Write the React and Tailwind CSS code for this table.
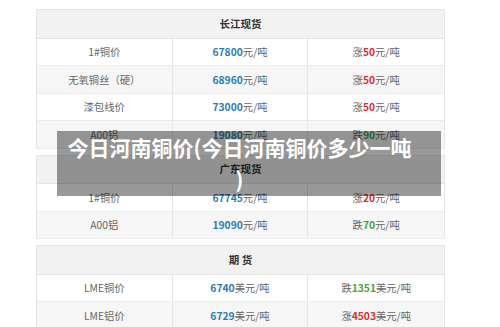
import React from 'react';

const tables = [
  {
    title: '长江现货',
    rows: [
      { name: '1#铜价', price: '67800', unit: '元/吨', dir: '涨', diff: '50', diffUnit: '元/吨' },
      { name: '无氧铜丝（硬）', price: '68960', unit: '元/吨', dir: '涨', diff: '50', diffUnit: '元/吨' },
      { name: '漆包线价', price: '73000', unit: '元/吨', dir: '涨', diff: '50', diffUnit: '元/吨' },
      { name: 'A00铝', price: '19080', unit: '元/吨', dir: '跌', diff: '90', diffUnit: '元/吨' },
    ],
  },
  {
    title: '广东现货',
    rows: [
      { name: '1#铜价', price: '67745', unit: '元/吨', dir: '涨', diff: '20', diffUnit: '元/吨' },
      { name: 'A00铝', price: '19090', unit: '元/吨', dir: '跌', diff: '70', diffUnit: '元/吨' },
    ],
  },
  {
    title: '期 货',
    rows: [
      { name: 'LME铜价', price: '6740', unit: '美元/吨', dir: '跌', diff: '1351', diffUnit: '美元/吨' },
      { name: 'LME铝价', price: '6729', unit: '美元/吨', dir: '涨', diff: '4503', diffUnit: '美元/吨' },
    ],
  },
];

const PriceTable = ({ title, rows }) => (
  <div className="border border-[#e6e6e6] border-b-0">
    <div className="h-[28.5px] flex items-center justify-center bg-[#f2f2f2] border-b border-[#e6e6e6] text-[10.5px] font-bold text-[#333]">
      {title}
    </div>
    {rows.map((r, i) => (
      <div
        key={r.name}
        className={`grid grid-cols-3 h-[27.5px] border-b border-[#ececec] text-[10.3px] text-[#666] ${i % 2 === 1 ? 'bg-[#f6f6f6]' : 'bg-white'}`}
      >
        <div className="flex items-center justify-center border-r border-[#e6e6e6]">{r.name}</div>
        <div className="flex items-center justify-center border-r border-[#e6e6e6]">
          <span className="font-bold text-[#2d7db3]">{r.price}</span>
          <span>{r.unit}</span>
        </div>
        <div className="flex items-center justify-center">
          <span>{r.dir}</span>
          <span className={`font-bold ${r.dir === '涨' ? 'text-[#e02b2b]' : 'text-[#3fa544]'}`}>{r.diff}</span>
          <span>{r.diffUnit}</span>
        </div>
      </div>
    ))}
  </div>
);

const App = () => {
  return (
    <div
      className="relative w-[500px] h-[327px] overflow-hidden bg-white"
      style={{ fontFamily: '"Noto Sans CJK SC", "Noto Sans", sans-serif' }}
    >
      <div className="ml-[36px] w-[409px] pt-[9px] flex flex-col gap-[6px]">
        {tables.map(t => (
          <PriceTable key={t.title} title={t.title} rows={t.rows} />
        ))}
      </div>

      <div className="absolute left-[57px] top-[131px] w-[384px] h-[65px] bg-black/40 flex items-center">
        <div className="w-full pr-[19px] text-center text-white font-bold text-[21px] leading-[31.5px]">
          今日河南铜价(今日河南铜价多少一吨
          <br />
          )
        </div>
      </div>
    </div>
  );
};

export default App;
